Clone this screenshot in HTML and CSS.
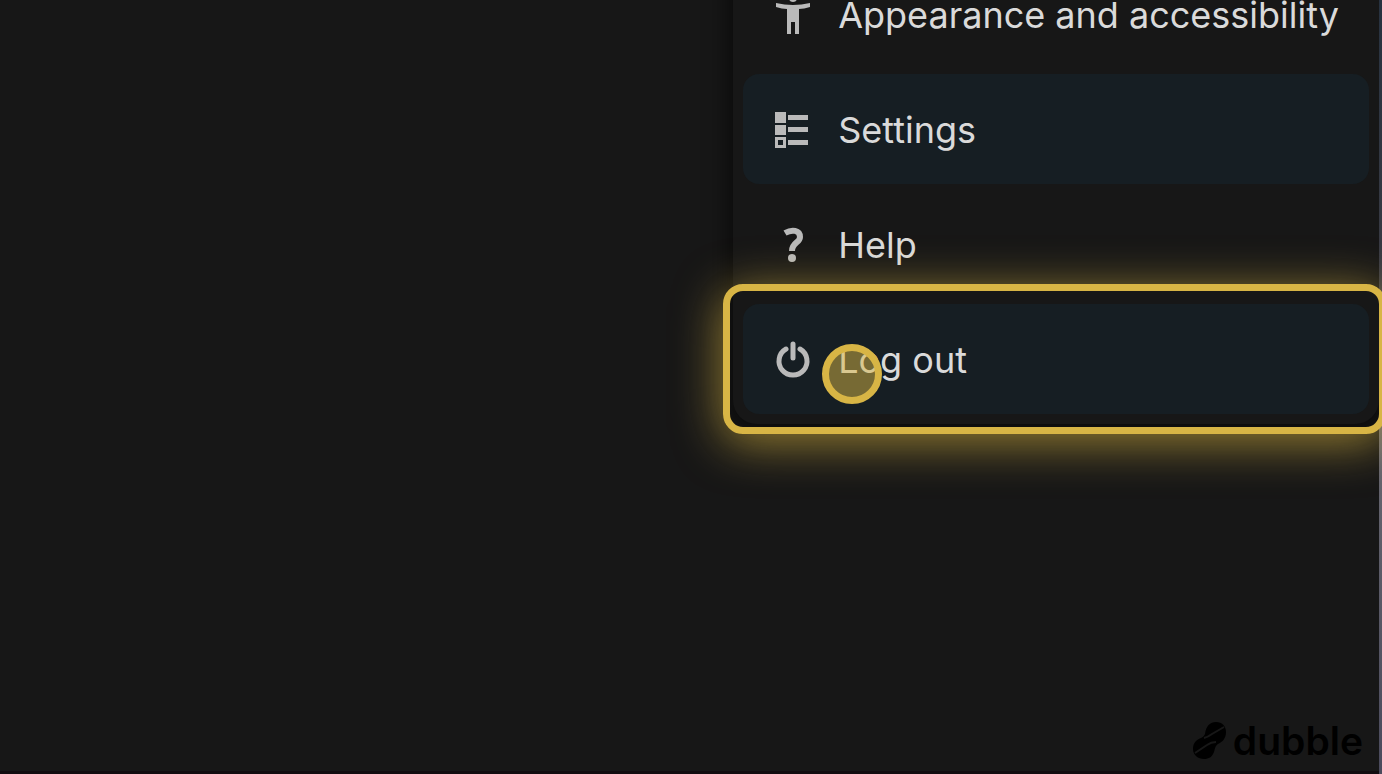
FILE: index.html
```html
<!DOCTYPE html>
<html lang="en">

<head>
    <meta charset="UTF-8">
    <meta name="viewport" content="width=device-width, initial-scale=1.0">
    <title>Log out</title>
    <link rel="stylesheet" href="styles.css">
</head>

<body>
    <main class="screen">
        <nav class="menu">
            <button class="menu_item" type="button">
                <svg class="menu_icon" viewBox="0 0 36 36">
                    <circle cx="18" cy="1" r="4" />
                    <path d="M1 6 Q18 10 35 6 L35 10 Q29 12 24 12 V37 H20 V25 H16 V37 H12 V12 Q7 12 1 10 Z" />
                </svg>
                <span>Appearance and accessibility</span>
            </button>
            <button class="menu_item menu_item_active" type="button">
                <svg class="menu_icon" viewBox="0 0 36 36">
                    <path d="M0 0H11V11H0Z M0 13H11V23H0Z" />
                    <path fill-rule="evenodd" d="M0 25H11V36H0Z M3 28V33H8V28Z" />
                    <path d="M13 3H33V8H13Z M13 15H33V20H13Z M13 28H33V33H13Z" />
                </svg>
                <span>Settings</span>
            </button>
            <button class="menu_item" type="button">
                <svg class="menu_icon" viewBox="0 0 36 36">
                    <path class="icon_line icon_bold" d="M10 6 C17 2 25 3 25 10 C25 16 17 15 17 24" />
                    <circle cx="17" cy="31" r="4" />
                </svg>
                <span>Help</span>
            </button>
            <button class="menu_item menu_item_active menu_item_target" type="button">
                <svg class="menu_icon" viewBox="0 0 36 36">
                    <path class="icon_line icon_round" d="M11 7 A14 14 0 1 0 25 7 M18 2 V16" />
                </svg>
                <span>Log out</span>
                <span class="click_dot"></span>
            </button>
        </nav>
        <div class="brand">
            <svg class="brand_logo" viewBox="0 0 34 38">
                <path d="M12 12 C13 4 17 0 23 0 C29 0 33 4 33 10 C33 17 29 20 25 22 C22 24 22 27 21 30 C19 35 16 37 11 37 C5 37 0 33 0 27 C0 21 3 18 8 16 C10 15 11 14 12 12 Z" />
                <path class="brand_cut" d="M11 16 Q15 15 19 12 L31 5 M2 31 L14 23 Q18 20 23 20" />
            </svg>
            <span>dubble</span>
        </div>
    </main>
    <div class="screen_edge"></div>
</body>

</html>
```

FILE: styles.css
```css
* {
    box-sizing: border-box;
}

body {
    margin: 0px;
    height: 100vh;
    display: flex;
    overflow: hidden;
    background-color: #171717;
    font-family: Inter, "Liberation Sans", sans-serif;
}

.screen {
    flex: 1;
    display: flex;
    flex-direction: column;
    align-items: flex-end;
    justify-content: space-between;
    border-bottom: 3px solid #120c10;
}

.screen_edge {
    width: 3px;
    background: linear-gradient(#273240, #3c3c44 40%, #66666f 58%, #4a4a5c);
}

/* the menu hangs down from above the top edge */
.menu {
    display: flex;
    flex-direction: column;
    gap: 5px;
    margin-top: -51px;
    padding: 10px;
    border-radius: 24px;
    background-color: #171717;
    box-shadow: 0px 4px 24px 4px rgba(0, 0, 0, 0.6);
}

.menu_item {
    position: relative;
    display: flex;
    align-items: center;
    gap: 27px;
    height: 110px;
    padding: 2px 30px 0px 32px;
    border: none;
    border-radius: 16px;
    background-color: transparent;
    color: #dadada;
    font-family: inherit;
    font-size: 36px;
    text-align: left;
}

.menu_item_active {
    background-color: #161e23;
}

.menu_icon {
    width: 36px;
    height: 36px;
    flex: none;
    fill: #bababa;
    overflow: visible;
}

.icon_line {
    fill: none;
    stroke: #bababa;
    stroke-width: 5;
}

.icon_bold {
    stroke-width: 6;
}

.icon_round {
    stroke-linecap: round;
}

/* yellow frame round the item to click */
.menu_item_target::after {
    content: "";
    position: absolute;
    top: -20px;
    bottom: -20px;
    left: -20px;
    right: -17px;
    border: 7px solid #d8b545;
    border-radius: 20px;
    box-shadow: 0px 8px 48px rgba(216, 181, 69, 0.7);
}

.click_dot {
    position: absolute;
    top: 40px;
    left: 79px;
    width: 60px;
    height: 60px;
    border: 7px solid #d8b545;
    border-radius: 50%;
    background-color: rgba(216, 181, 69, 0.5);
}

.brand {
    display: flex;
    align-items: center;
    gap: 6px;
    padding: 0px 16px 10px 0px;
    color: #000000;
    font-size: 39px;
    font-weight: 600;
    line-height: 40px;
}

.brand_logo {
    width: 34px;
    height: 38px;
}

.brand_cut {
    fill: none;
    stroke: #171717;
    stroke-width: 2;
}
```
